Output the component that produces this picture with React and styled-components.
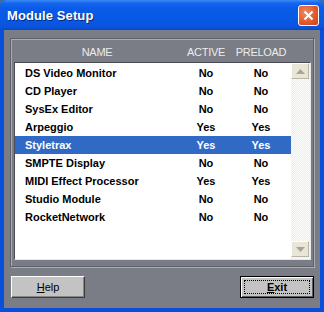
import React from 'react';
import styled, { createGlobalStyle } from 'styled-components';

const GlobalStyle = createGlobalStyle`
    html, body {
        margin: 0;
        padding: 0;
        background: #3a6ea5;
    }
    * {
        box-sizing: border-box;
    }
`;

const Window = styled.div`
    width: 324px;
    height: 312px;
    display: flex;
    flex-direction: column;
    background: #0a4fdc;
    border-radius: 7px 7px 0 0;
    overflow: hidden;
    font-family: "Liberation Sans", Arial, sans-serif;
`;

const TitleBar = styled.div`
    height: 30px;
    flex: none;
    display: flex;
    align-items: center;
    justify-content: space-between;
    padding: 0 5px 0 7px;
    background: linear-gradient(to bottom, #3d8cf9 0px, #1765ee 3px, #0a5be8 8px, #0858e6 20px, #0a54dd 27px, #0846c6 30px);
`;

const Title = styled.span`
    color: #fff;
    font-weight: bold;
    font-size: 13px;
    text-shadow: 1px 1px 0 #0a2a7a;
    letter-spacing: 0.1px;
    margin-top: 1px;
`;

const CloseButton = styled.div`
    width: 21px;
    height: 21px;
    border: 1px solid #fff;
    border-radius: 3px;
    background: radial-gradient(circle at 35% 35%, #f08a64 0%, #e35a2e 55%, #c8401a 100%);
    display: flex;
    align-items: center;
    justify-content: center;
    margin-top: 1px;
`;

const Body = styled.div`
    flex: 1;
    margin: 0 4px 4px 4px;
    background: #7a7d85;
    padding: 8px 6px 10px 6px;
    display: flex;
    flex-direction: column;
`;

const GroupFrame = styled.div`
    height: 229px;
    border: 1px solid #5d6067;
    box-shadow: inset 1px 1px 0 #a9acb2, 1px 1px 0 #a9acb2;
    padding: 1px 2px 6px 3px;
    display: flex;
    flex-direction: column;
`;

const Columns = styled.div`
    display: grid;
    grid-template-columns: 164px 54px 56px;
    align-items: center;
`;

const HeaderRow = styled(Columns)`
    height: 22px;
    padding-left: 1px;
    color: #ececec;
    font-size: 11px;
    letter-spacing: -0.3px;
`;

const HeaderCell = styled.div`
    text-align: center;
    padding-top: 1px;
    padding-left: ${p => p.shift || 0}px;
`;

const ListBox = styled.div`
    flex: 1;
    display: flex;
    border: 1px solid;
    border-color: #4a4c52 #e8e8e8 #e8e8e8 #4a4c52;
    background: #fff;
`;

const List = styled.div`
    flex: 1;
    padding-top: 1px;
`;

const Row = styled(Columns)`
    height: 18px;
    font-size: 11px;
    font-weight: bold;
    color: ${p => (p.selected ? '#fff' : '#000')};
    background: ${p => (p.selected ? '#316ac5' : 'transparent')};
`;

const NameCell = styled.div`
    padding-left: 10px;
    white-space: nowrap;
`;

const ValueCell = styled.div`
    text-align: center;
    padding-left: ${p => p.shift || 0}px;
`;

const ScrollBar = styled.div`
    width: 19px;
    display: flex;
    flex-direction: column;
    justify-content: space-between;
    background: repeating-conic-gradient(#efede3 0 25%, #fdfdfb 0 50%) 0 0 / 2px 2px;
    padding: 0 1px 2px 0;
`;

const ScrollButton = styled.div`
    height: 16px;
    background: #e9e6d8;
    border: 1px solid;
    border-color: #fdfdfb #b9b5a4 #b9b5a4 #fdfdfb;
    display: flex;
    align-items: center;
    justify-content: center;
`;

const ButtonRow = styled.div`
    display: flex;
    justify-content: space-between;
    margin-top: 9px;
    padding: 0 0 0 1px;
`;

const Button = styled.div`
    width: 74px;
    height: 22px;
    display: flex;
    align-items: center;
    justify-content: center;
    background: #c3c3c3;
    font-size: 11px;
    color: #000;
    font-weight: ${p => (p.primary ? 'bold' : 'normal')};
    border: 1px solid ${p => (p.primary ? '#000' : '#c3c3c3')};
    box-shadow: ${p => (p.primary
        ? 'inset 1px 1px 0 #fff, inset -1px -1px 0 #5e5e5e'
        : 'inset 1px 1px 0 #fff, inset -1px -1px 0 #3c3c3c')};
    position: relative;
    ${p => p.primary && `
        &::after {
            content: '';
            position: absolute;
            inset: 3px;
            border: 1px dotted #000;
        }
    `}
    ${p => !p.primary && `
        border-color: #ffffff #3c3c3c #3c3c3c #ffffff;
        box-shadow: inset -1px -1px 0 #868686;
    `}
`;

const Key = styled.span`
    text-decoration: underline;
`;

const modules = [
    ['DS Video Monitor', 'No', 'No'],
    ['CD Player', 'No', 'No'],
    ['SysEx Editor', 'No', 'No'],
    ['Arpeggio', 'Yes', 'Yes'],
    ['Styletrax', 'Yes', 'Yes'],
    ['SMPTE Display', 'No', 'No'],
    ['MIDI Effect Processor', 'Yes', 'Yes'],
    ['Studio Module', 'No', 'No'],
    ['RocketNetwork', 'No', 'No'],
];

const Arrow = ({ down }) => (
    <svg width="9" height="5" viewBox="0 0 9 5">
        <polygon points={down ? '0,0 9,0 4.5,5' : '0,5 9,5 4.5,0'} fill="#a6a39a" />
    </svg>
);

export default function App() {
    return (
        <>
            <GlobalStyle />
            <Window>
                <TitleBar>
                    <Title>Module Setup</Title>
                    <CloseButton>
                        <svg width="11" height="11" viewBox="0 0 11 11">
                            <path d="M1.5 1.5 L9.5 9.5 M9.5 1.5 L1.5 9.5" stroke="#fff" strokeWidth="2" />
                        </svg>
                    </CloseButton>
                </TitleBar>
                <Body>
                    <GroupFrame>
                        <HeaderRow>
                            <HeaderCell>NAME</HeaderCell>
                            <HeaderCell shift={-4}>ACTIVE</HeaderCell>
                            <HeaderCell>PRELOAD</HeaderCell>
                        </HeaderRow>
                        <ListBox>
                            <List>
                                {modules.map(([name, active, preload]) => (
                                    <Row key={name} selected={name === 'Styletrax'}>
                                        <NameCell>{name}</NameCell>
                                        <ValueCell>{active}</ValueCell>
                                        <ValueCell>{preload}</ValueCell>
                                    </Row>
                                ))}
                            </List>
                            <ScrollBar>
                                <ScrollButton><Arrow /></ScrollButton>
                                <ScrollButton><Arrow down /></ScrollButton>
                            </ScrollBar>
                        </ListBox>
                    </GroupFrame>
                    <ButtonRow>
                        <Button><Key>H</Key>elp</Button>
                        <Button primary><Key>E</Key>xit</Button>
                    </ButtonRow>
                </Body>
            </Window>
        </>
    );
}
